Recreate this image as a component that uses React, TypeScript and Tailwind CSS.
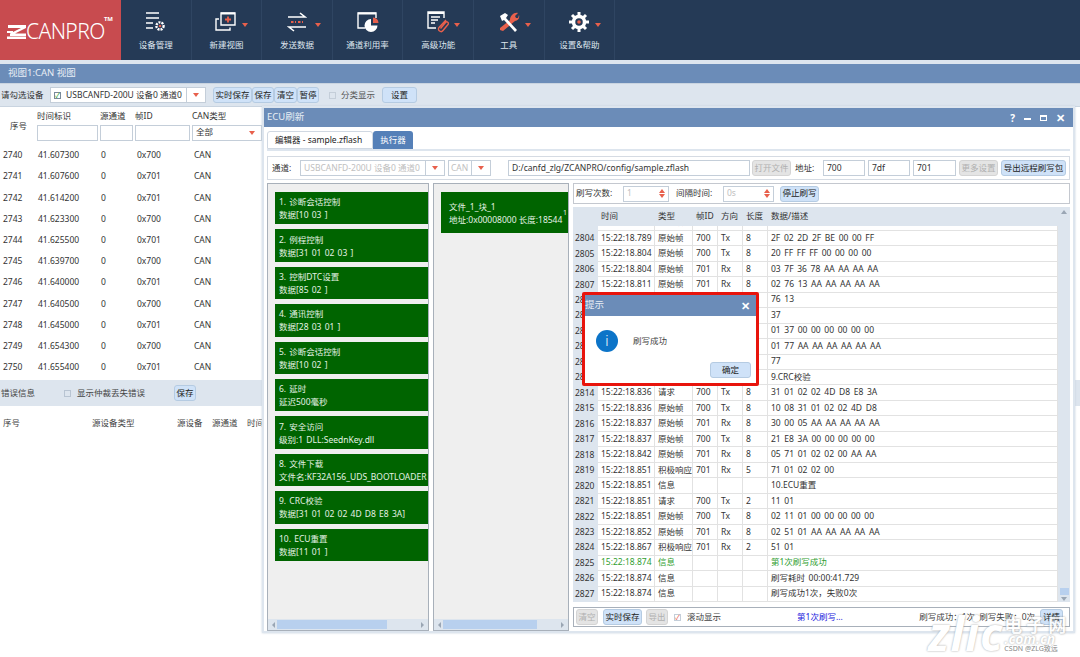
const leftRows = [
  ["2740", "41.607300", "0", "0x700"],
  ["2741", "41.607600", "0", "0x701"],
  ["2742", "41.614200", "0", "0x701"],
  ["2743", "41.623300", "0", "0x700"],
  ["2744", "41.625500", "0", "0x701"],
  ["2745", "41.639700", "0", "0x700"],
  ["2746", "41.640000", "0", "0x701"],
  ["2747", "41.640500", "0", "0x700"],
  ["2748", "41.645000", "0", "0x701"],
  ["2749", "41.654300", "0", "0x700"],
  ["2750", "41.655400", "0", "0x701"],
];

const steps = [
  ["1. 诊断会话控制", "数据[10 03 ]"],
  ["2. 例程控制", "数据[31 01 02 03 ]"],
  ["3. 控制DTC设置", "数据[85 02 ]"],
  ["4. 通讯控制", "数据[28 03 01 ]"],
  ["5. 诊断会话控制", "数据[10 02 ]"],
  ["6. 延时", "延迟500毫秒"],
  ["7. 安全访问", "级别:1 DLL:SeednKey.dll"],
  ["8. 文件下载", "文件名:KF32A156_UDS_BOOTLOADER"],
  ["9. CRC校验", "数据[31 01 02 02 4D D8 E8 3A]"],
  ["10. ECU重置", "数据[11 01 ]"],
];

const logRows = [
  ["2803", "15:22:18.788", "原始帧", "700", "Tx", "8", "2F 02 2D 2F BE 00 00 FF"],
  ["2804", "15:22:18.789", "原始帧", "700", "Tx", "8", "2F 02 2D 2F BE 00 00 FF"],
  ["2805", "15:22:18.804", "原始帧", "700", "Tx", "8", "20 FF FF FF 00 00 00 00"],
  ["2806", "15:22:18.804", "原始帧", "701", "Rx", "8", "03 7F 36 78 AA AA AA AA"],
  ["2807", "15:22:18.811", "原始帧", "701", "Rx", "8", "02 76 13 AA AA AA AA AA"],
  ["2808", "15:22:18.811", "积极响应", "701", "Rx", "2", "76 13"],
  ["2809", "15:22:18.811", "请求", "700", "Tx", "1", "37"],
  ["2810", "15:22:18.811", "原始帧", "700", "Tx", "8", "01 37 00 00 00 00 00 00"],
  ["2811", "15:22:18.820", "原始帧", "701", "Rx", "8", "01 77 AA AA AA AA AA AA"],
  ["2812", "15:22:18.835", "积极响应", "701", "Rx", "1", "77"],
  ["2813", "15:22:18.835", "信息", "", "", "", "9.CRC校验"],
  ["2814", "15:22:18.836", "请求", "700", "Tx", "8", "31 01 02 02 4D D8 E8 3A"],
  ["2815", "15:22:18.836", "原始帧", "700", "Tx", "8", "10 08 31 01 02 02 4D D8"],
  ["2816", "15:22:18.837", "原始帧", "701", "Rx", "8", "30 00 05 AA AA AA AA AA"],
  ["2817", "15:22:18.837", "原始帧", "700", "Tx", "8", "21 E8 3A 00 00 00 00 00"],
  ["2818", "15:22:18.842", "原始帧", "701", "Rx", "8", "05 71 01 02 02 00 AA AA"],
  ["2819", "15:22:18.851", "积极响应", "701", "Rx", "5", "71 01 02 02 00"],
  ["2820", "15:22:18.851", "信息", "", "", "", "10.ECU重置"],
  ["2821", "15:22:18.851", "请求", "700", "Tx", "2", "11 01"],
  ["2822", "15:22:18.851", "原始帧", "700", "Tx", "8", "02 11 01 00 00 00 00 00"],
  ["2823", "15:22:18.852", "原始帧", "701", "Rx", "8", "02 51 01 AA AA AA AA AA"],
  ["2824", "15:22:18.867", "积极响应", "701", "Rx", "2", "51 01"],
  ["2825", "15:22:18.874", "信息", "", "", "", "第1次刷写成功"],
  ["2826", "15:22:18.874", "信息", "", "", "", "刷写耗时 00:00:41.729"],
  ["2827", "15:22:18.874", "信息", "", "", "", "刷写成功1次，失败0次"],
];

const Arrow = () => <span className="inline-block h-0 w-0 border-x-[3px] border-t-[4px] border-x-transparent border-t-[#e8604c]" />;

const IconDevice = () => (
  <svg width="22" height="22" viewBox="0 0 22 22" fill="none" stroke="#fff" strokeWidth="1.5">
    <path d="M1 2h13M1 7h13M1 12h7M1 17h7" />
    <circle cx="15" cy="15" r="3.6" strokeWidth="2.4" strokeDasharray="2 1" />
    <circle cx="15" cy="15" r="1.3" fill="#e8604c" stroke="none" />
  </svg>
);

const IconView = () => (
  <svg width="22" height="22" viewBox="0 0 22 22" fill="none" stroke="#fff" strokeWidth="1.4">
    <path d="M6 2h14v12H6z" />
    <path d="M6 2.500h14" strokeWidth="2" />
    <path d="M4 8H1v11h14v-2.500" />
    <path d="M10 8.500h6M13 5.500v6" stroke="#e8604c" strokeWidth="1.8" />
  </svg>
);

const IconSend = () => (
  <svg width="20" height="20" viewBox="0 0 20 20" fill="none" stroke="#fff" strokeWidth="1.6">
    <path d="M1 5h17L13 1" />
    <path d="M19 15H2l5 4" />
    <path d="M4 10h2.500M8 10h1M11 10h2.500M15 10h1" stroke="#e8604c" strokeWidth="2" />
  </svg>
);

const IconUsage = () => (
  <svg width="22" height="22" viewBox="0 0 22 22" fill="none" stroke="#fff" strokeWidth="1.4">
    <path d="M8 17H1V2h18v5" />
    <path d="M1 2.500h18" strokeWidth="2" />
    <path d="M14 8a6.500 6.500 0 1 0 6.500 6.500H14z" fill="#fff" stroke="none" />
    <path d="M16 6.500a5.500 5.500 0 0 1 5.500 5.500H16z" fill="#e8604c" stroke="none" />
  </svg>
);

const IconAdvanced = () => (
  <svg width="22" height="22" viewBox="0 0 22 22" fill="none" stroke="#fff" strokeWidth="1.4">
    <path d="M9 17H1V1h16v6" />
    <path d="M1 2h16" strokeWidth="2" />
    <path d="M4 6h9M4 9h7M4 12h4" />
    <path d="M19 9l-7 7.500a2.500 2.500 0 0 0 4 3l5-6a1.600 1.600 0 0 0-2.500-2l-5 6" stroke="#e8604c" />
  </svg>
);

const IconTools = () => (
  <svg width="22" height="22" viewBox="0 0 22 22" fill="none">
    <path d="M20 2l-3 3 1 2 2 0 1-3c1 3-1 6-4 6L5 20l-3-1 0-2 10-8c0-4 4-8 8-7z" fill="#e8604c" />
    <path d="M2 5l5-3 3 2-2 3 11 12-2 2L6 9 4 10z" fill="#fff" />
  </svg>
);

const IconGear = () => (
  <svg width="20" height="20" viewBox="0 0 20 20" fill="none">
    <circle cx="10" cy="10" r="5.500" stroke="#fff" strokeWidth="3.500" />
    <path d="M10 0v4M10 16v4M0 10h4M16 10h4M3 3l3 3M14 14l3 3M17 3l-3 3M6 14l-3 3" stroke="#fff" strokeWidth="3" />
    <circle cx="10" cy="10" r="1.800" fill="#e8604c" />
  </svg>
);

const nav = [
  { label: "设备管理", icon: <IconDevice />, arrow: "" },
  { label: "新建视图", icon: <IconView />, arrow: "-right-[11px]" },
  { label: "发送数据", icon: <IconSend />, arrow: "-right-[14px]" },
  { label: "通道利用率", icon: <IconUsage />, arrow: "" },
  { label: "高级功能", icon: <IconAdvanced />, arrow: "-right-[11px]" },
  { label: "工具", icon: <IconTools />, arrow: "-right-[11px]" },
  { label: "设置&帮助", icon: <IconGear />, arrow: "-right-[12px]" },
];

const Btn = ({ children, className = "" }: { children: React.ReactNode; className?: string }) => (
  <div className={`flex h-4 items-center justify-center rounded-[3px] border border-[#b5cbe2] bg-[#cfe2f8] text-[8.5px] text-[#222] ${className}`}>
    {children}
  </div>
);

const BtnOff = ({ children, className = "" }: { children: React.ReactNode; className?: string }) => (
  <div className={`flex h-4 items-center justify-center rounded-[3px] border border-[#d4d4d4] bg-[#e4e4e4] text-[8.5px] text-[#b0b0b0] ${className}`}>
    {children}
  </div>
);

const Field = ({ children, className = "" }: { children?: React.ReactNode; className?: string }) => (
  <div className={`flex h-4 items-center border border-[#c4ced9] bg-white px-[3px] text-[8.5px] text-[#333] ${className}`}>{children}</div>
);

const HScroll = ({ thumb }: { thumb: string }) => (
  <div className="flex h-[11px] items-center bg-[#dde5ee] px-1 text-[#9aa6b4]">
    <span className="h-0 w-0 border-y-[3px] border-r-[3px] border-y-transparent border-r-[#9aa6b4]" />
    <div className="mx-[2px] flex-1">
      <div className={`h-[9px] bg-[#b8d0ee] ${thumb}`} />
    </div>
    <span className="h-0 w-0 border-y-[3px] border-l-[3px] border-y-transparent border-l-[#9aa6b4]" />
  </div>
);

const logGrid = "grid grid-cols-[25px_57px_38px_25px_25px_25px_1fr]";

function EcuWindow() {
  return (
    <div className="absolute left-[262px] top-[106px] flex h-[527px] w-[813px] flex-col border-2 border-[#dde5ee] bg-white shadow-[0_0_2px_#c5d0dc]">
      <div className="flex h-[19px] shrink-0 items-center justify-between bg-[#6b8cb8] pl-[3px] pr-2 text-[9.500px] text-[#e8eef5]">
        <span>ECU刷新</span>
        <div className="flex items-center gap-[9px] text-white">
          <span className="text-[10px] font-bold leading-none">?</span>
          <span className="mt-[3px] h-[2px] w-[7px] bg-white" />
          <span className="h-[6px] w-[7px] border-x border-b border-t-2 border-white" />
          <span className="text-[11px] font-bold leading-none">✕</span>
        </div>
      </div>

      <div className="mx-[3px] mt-[5px] flex h-[19px] shrink-0 items-end border-b-2 border-[#dde5ee] text-[8.5px]">
        <div className="flex h-[18px] w-[106px] items-center rounded-t-[3px] border border-[#d0d8e2] bg-white pl-[7px] text-[#222]">
          编辑器 - sample.zflash
        </div>
        <div className="flex h-[18px] w-[40px] items-center justify-center rounded-t-[3px] bg-[#5580b8] text-white">执行器</div>
      </div>

      <div className="mx-[3px] mt-[5px] flex h-[24px] shrink-0 items-center border border-[#d5dbe3] pl-[4px] text-[8.5px] text-[#333]">
        <span className="w-[28px]">通道:</span>
        <div className="flex h-4 w-[145px] items-center border border-[#c4ced9] text-[#c0c0c0]">
          <span className="flex-1 overflow-hidden whitespace-nowrap pl-[3px]">USBCANFD-200U 设备0 通道0</span>
          <span className="flex h-full w-[19px] shrink-0 items-center justify-center border-l border-[#c4ced9]"><Arrow /></span>
        </div>
        <div className="ml-[3px] flex h-4 w-[43px] items-center border border-[#c4ced9] text-[#c0c0c0]">
          <span className="flex-1 pl-[2px]">CAN</span>
          <span className="flex h-full w-[19px] items-center justify-center border-l border-[#c4ced9]"><Arrow /></span>
        </div>
        <Field className="ml-[17px] w-[242px]">D:/canfd_zlg/ZCANPRO/config/sample.zflash</Field>
        <BtnOff className="ml-[2px] w-[39px]">打开文件</BtnOff>
        <span className="ml-[4px] w-[28px]">地址:</span>
        <Field className="w-[42px]">700</Field>
        <Field className="ml-[3px] w-[42px]">7df</Field>
        <Field className="ml-[3px] w-[43px]">701</Field>
        <BtnOff className="ml-[3px] w-[39px]">更多设置</BtnOff>
        <Btn className="ml-[3px] w-[65px]">导出远程刷写包</Btn>
      </div>

      <div className="mx-[3px] mt-[3px] flex min-h-0 flex-1 gap-[4px]">
        <div className="flex w-[162px] shrink-0 flex-col border border-[#a8b0ba] bg-[#efefef]">
          <div className="flex flex-1 flex-col gap-[5px] overflow-hidden pl-[7px] pt-[8px]">
            {steps.map(([title, data]) => (
              <div key={title} className="flex h-[32.4px] shrink-0 flex-col justify-center overflow-hidden whitespace-nowrap bg-[#006400] pl-[4px] text-[8.5px] leading-[13px] text-[#e4f2e4] [word-spacing:1px]">
                <span>{title}</span>
                <span>{data}</span>
              </div>
            ))}
          </div>
          <HScroll thumb="w-[110px]" />
        </div>

        <div className="flex w-[136px] shrink-0 flex-col border border-[#a8b0ba] bg-[#efefef]">
          <div className="flex-1 overflow-hidden pl-[7px] pt-[8px]">
            <div className="relative flex h-[41px] flex-col justify-center whitespace-nowrap bg-[#006400] pl-[8px] text-[8.5px] leading-[13px] text-[#e4f2e4]">
              <span>文件_1_块_1</span>
              <span>地址:0x00008000 长度:18544</span>
              <span className="absolute right-[1px] top-[14px] text-[7px]">1</span>
            </div>
          </div>
          <HScroll thumb="w-[94px]" />
        </div>

        <div className="flex min-w-0 flex-1 flex-col">
          <div className="flex h-[21px] shrink-0 items-center border border-[#c4c8cf] pl-[2px] text-[8.5px] text-[#333]">
            <span className="w-[47px]">刷写次数:</span>
            <Field className="relative w-[46px] text-[#c0c0c0]">
              1
              <span className="absolute right-[3px] top-[2px] flex flex-col gap-[1px]">
                <span className="h-0 w-0 border-x-[3px] border-b-[4px] border-x-transparent border-b-[#e8604c]" />
                <Arrow />
              </span>
            </Field>
            <span className="ml-[7px] w-[47px]">间隔时间:</span>
            <Field className="relative w-[51px] text-[#c0c0c0]">
              0s
              <span className="absolute right-[3px] top-[2px] flex flex-col gap-[1px]">
                <span className="h-0 w-0 border-x-[3px] border-b-[4px] border-x-transparent border-b-[#e8604c]" />
                <Arrow />
              </span>
            </Field>
            <Btn className="ml-[6px] w-[39px]">停止刷写</Btn>
          </div>

          <div className="mt-[3px] flex min-h-0 flex-1 bg-[#dde5ee]">
            <div className="flex min-w-0 flex-1 flex-col">
              <div className={`${logGrid} h-[19px] shrink-0 items-center text-[8.5px] text-[#333]`}>
                <span />
                <span className="pl-[3px]">时间</span>
                <span className="pl-[3px]">类型</span>
                <span className="pl-[3px]">帧ID</span>
                <span className="pl-[3px]">方向</span>
                <span className="pl-[3px]">长度</span>
                <span className="pl-[3px]">数据/描述</span>
              </div>
              <div className="flex min-h-0 flex-1 flex-col justify-end overflow-hidden">
                {logRows.map((r) => {
                  const ok = r[0] === "2825";
                  return (
                    <div key={r[0]} className={`${logGrid} h-[15.48px] shrink-0 items-center whitespace-nowrap text-[8.5px] [word-spacing:1.4px] ${ok ? "text-[#2f9e2f]" : "text-[#333]"}`}>
                      <span className="pl-[2px] text-[#333]">{r[0]}</span>
                      {r.slice(1).map((c, i) => (
                        <span key={i} className="flex h-full items-center border-b border-r border-[#e2e2e2] bg-white pl-[3px]">{c}</span>
                      ))}
                    </div>
                  );
                })}
              </div>
            </div>
            <div className="flex w-[12px] shrink-0 flex-col items-center justify-between pt-[3px]">
              <span className="h-0 w-0 border-x-[3px] border-b-[4px] border-x-transparent border-b-[#9aa6b4]" />
              <div className="flex w-full flex-col items-center gap-[2px] pb-[1px]">
                <div className="h-[7px] w-[9px] bg-[#b8d0ee]" />
                <span className="h-0 w-0 border-x-[3px] border-t-[4px] border-x-transparent border-t-[#9aa6b4]" />
              </div>
            </div>
          </div>

          <div className="mb-[4px] mt-[5px] flex h-[20px] shrink-0 items-center border border-[#a8b0ba] pl-[2px] pr-[6px] text-[8.5px] text-[#444]">
            <BtnOff className="w-[22px]">清空</BtnOff>
            <Btn className="ml-[5px] w-[39px]">实时保存</Btn>
            <BtnOff className="ml-[4px] w-[22px]">导出</BtnOff>
            <span className="ml-[6px] flex h-[7px] w-[7px] items-center justify-center border border-[#c4ced9] text-[7px] leading-none text-[#e8604c]">✓</span>
            <span className="ml-[6px]">滚动显示</span>
            <span className="ml-[76px] text-[#2222dd]">第1次刷写...</span>
            <span className="ml-auto">刷写成功：1次</span>
            <span className="ml-[4px]">刷写失败：0次</span>
            <Btn className="ml-[5px] w-[23px]">详情</Btn>
          </div>
        </div>
      </div>
    </div>
  );
}

function Dialog() {
  return (
    <div className="absolute left-[582px] top-[292px] flex h-[94px] w-[177px] flex-col rounded-[2px] border-[3px] border-[#e8140c] bg-white">
      <div className="flex h-[21px] shrink-0 items-center justify-between bg-[#6b8cb8] pr-[6px] text-[9.500px] text-[#e8eef5]">
        <span>提示</span>
        <span className="text-[11px] font-bold leading-none text-white">✕</span>
      </div>
      <div className="flex flex-1 flex-col px-[11px]">
        <div className="mt-[14px] flex items-center">
          <span className="flex h-[22px] w-[22px] items-center justify-center rounded-full bg-[#0c74c8] text-[14px] font-light leading-none text-white">i</span>
          <span className="ml-[15px] text-[8.5px] text-[#444]">刷写成功</span>
        </div>
        <div className="mt-auto mb-[5px] flex justify-end">
          <Btn className="-mr-[6px] w-[41px]">确定</Btn>
        </div>
      </div>
    </div>
  );
}

export default function App() {
  return (
    <div className="relative h-[657px] w-[1080px] overflow-hidden bg-white font-['Noto_Sans','Noto_Sans_CJK_SC',sans-serif]">
      <header className="flex h-[60px] bg-[#253a56]">
        <div className="relative flex w-[121px] shrink-0 items-center bg-[#c84b4f] pl-[7px] pt-[3px] text-white">
          <svg width="19" height="14" viewBox="0 0 19 14" fill="#fff">
            <path d="M1 0h18v3L8 8.500h11V11H3V8.500L14 3H1zM0 6h6v2H0zM0 11.500h19V14H0z" />
          </svg>
          <span className="text-[21px] font-light leading-none tracking-[-0.6px]">CANPRO</span>
          <span className="absolute right-[8px] top-[15px] text-[6px] font-bold">TM</span>
        </div>
        {nav.map((n) => (
          <div key={n.label} className="flex w-[70.6px] shrink-0 flex-col items-center border-r border-[#2f4562] text-[8.5px] text-[#dfe6ee]">
            <div className="relative mt-[10px] flex h-[24px] items-center justify-center">
              {n.icon}
              {n.arrow && (
                <span className={`absolute top-[8px] ${n.arrow}`}><Arrow /></span>
              )}
            </div>
            <span className="mt-[5px] whitespace-nowrap">{n.label}</span>
          </div>
        ))}
      </header>

      <div className="h-[4px] bg-[#dde5ee]" />
      <div className="flex h-[19px] items-center bg-[#6b8cb8] pl-[8px] text-[9.500px] text-[#e8eef5]">视图1:CAN 视图</div>

      <div className="flex h-[24px] items-center border-y border-[#c9d4e0] bg-[#dde5ee] pl-[1px] text-[8.5px] text-[#333]">
        <span className="w-[49px]">请勾选设备</span>
        <div className="flex h-4 w-[156px] items-center border border-[#c4ced9] bg-white">
          <span className="ml-[3px] flex h-[7px] w-[7px] shrink-0 items-center justify-center border border-[#7a8a9a] text-[7px] leading-none text-[#2a9a2a]">✓</span>
          <span className="ml-[5px] flex-1 overflow-hidden whitespace-nowrap">USBCANFD-200U 设备0 通道0</span>
          <span className="flex h-full w-[19px] shrink-0 items-center justify-center border-l border-[#c4ced9]"><Arrow /></span>
        </div>
        <div className="ml-[7px] flex">
          <Btn className="w-[39px]">实时保存</Btn>
          <Btn className="w-[22px]">保存</Btn>
          <Btn className="w-[23px]">清空</Btn>
          <Btn className="w-[22px]">暂停</Btn>
        </div>
        <span className="ml-[10px] h-[7px] w-[7px] border border-[#c4ced9]" />
        <span className="ml-[5px] text-[#555]">分类显示</span>
        <Btn className="ml-[7px] w-[35px]">设置</Btn>
      </div>

      <div className="flex h-[36px] items-stretch pt-[3px] text-[8.5px] text-[#333]">
        <span className="flex w-[37px] items-center pl-[10px]">序号</span>
        <div className="flex w-[63px] flex-col gap-[2px]"><span>时间标识</span><Field className="h-4 w-[61px]" /></div>
        <div className="flex w-[35px] flex-col gap-[2px]"><span>源通道</span><Field className="h-4 w-[33px]" /></div>
        <div className="flex w-[57px] flex-col gap-[2px]"><span>帧ID</span><Field className="h-4 w-[55px]" /></div>
        <div className="flex w-[70px] flex-col gap-[2px]">
          <span>CAN类型</span>
          <Field className="h-4 justify-between pr-[6px]">全部<Arrow /></Field>
        </div>
      </div>

      <div className="mt-[2px]">
        {leftRows.map((r) => (
          <div key={r[0]} className="grid h-[21.2px] grid-cols-[38px_63px_36px_57px_70px] items-center text-[8.5px] text-[#333]">
            <span className="pl-[3px]">{r[0]}</span>
            <span>{r[1]}</span>
            <span>{r[2]}</span>
            <span>{r[3]}</span>
            <span>CAN</span>
          </div>
        ))}
      </div>

      <div className="mt-[2px] flex h-[26px] items-center bg-[#dde5ee] pl-[1px] text-[8.5px] text-[#444]">
        <span className="w-[63px]">错误信息</span>
        <span className="h-[7px] w-[7px] border border-[#b8c4d2]" />
        <span className="ml-[6px] w-[97px]">显示仲裁丢失错误</span>
        <Btn className="w-[22px]">保存</Btn>
      </div>

      <div className="mt-[11px] grid grid-cols-[92px_85px_35px_35px_15px] text-[8.5px] text-[#444]">
        <span className="pl-[3px]">序号</span>
        <span>源设备类型</span>
        <span>源设备</span>
        <span>源通道</span>
        <span className="overflow-hidden whitespace-nowrap">时间</span>
      </div>

      <EcuWindow />
      <Dialog />

      {/* watermark */}
      <div className="pointer-events-none absolute left-[928px] top-[610px] flex items-start text-white">
        <span className="text-[46px] font-bold italic leading-none tracking-[1px] [text-shadow:0_0_2px_#9a9a9a]">zlic</span>
        <div className="ml-[1px] mt-[8px] flex flex-col">
          <span className="text-[18px] font-bold leading-[15px] tracking-[4px] opacity-80 [text-shadow:0_0_2px_#777]">电子网</span>
          <span className="text-[14px] font-bold italic leading-[11px] [text-shadow:0_0_2px_#999]">.com.cn</span>
          <span className="text-[7px] leading-[9px] text-[#888]">CSDN @ZLG致远</span>
        </div>
      </div>
    </div>
  );
}
